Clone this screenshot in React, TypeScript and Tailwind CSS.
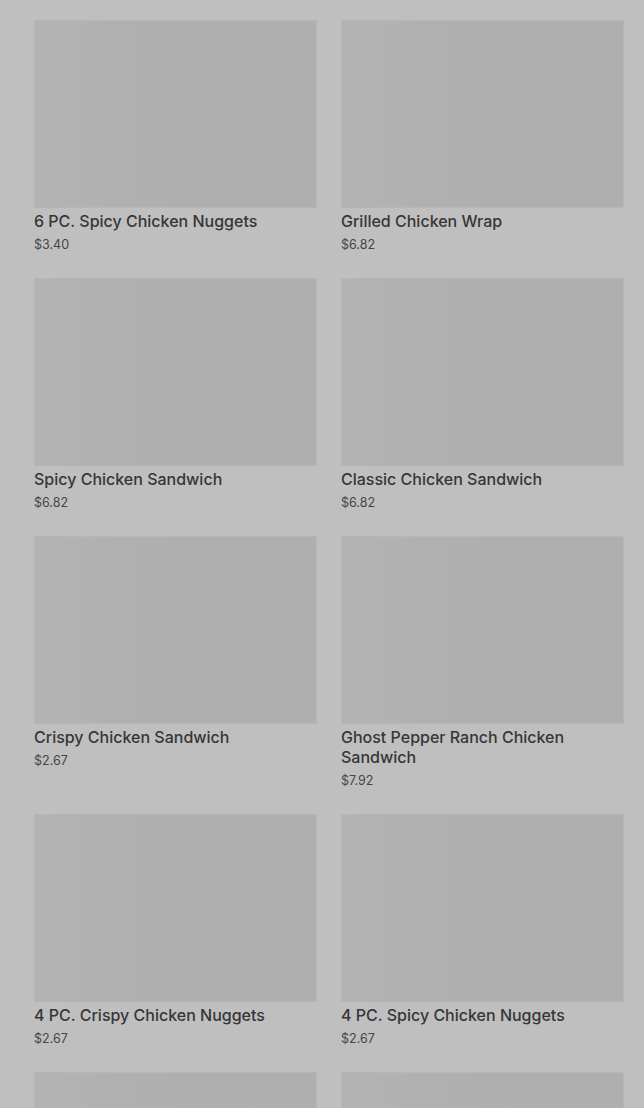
import React from 'react';

const items = [
  { name: '6 PC. Spicy Chicken Nuggets', price: '$3.40' },
  { name: 'Grilled Chicken Wrap', price: '$6.82' },
  { name: 'Spicy Chicken Sandwich', price: '$6.82' },
  { name: 'Classic Chicken Sandwich', price: '$6.82' },
  { name: 'Crispy Chicken Sandwich', price: '$2.67' },
  { name: 'Ghost Pepper Ranch Chicken Sandwich', price: '$7.92' },
  { name: '4 PC. Crispy Chicken Nuggets', price: '$2.67' },
  { name: '4 PC. Spicy Chicken Nuggets', price: '$2.67' },
  { name: '', price: '' },
  { name: '', price: '' },
];

const Card = ({ name, price }: { name: string; price: string }) => (
  <div className="flex flex-col">
    {/* skeleton image */}
    <div className="h-[188px] w-full border border-[#b6b6b6] bg-gradient-to-r from-[#b3b3b3] via-[#afafaf] to-[#afafaf]" />
    {name && (
      <p className="mt-[3px] text-[16px] leading-5 font-medium text-[#363636]">{name}</p>
    )}
    {price && <p className="mt-[4px] text-[12.5px] leading-5 text-[#464646]">{price}</p>}
  </div>
);

export default function App() {
  return (
    <div
      className="h-[1108px] overflow-hidden bg-[#bfbfbf] pt-5 pl-[34px] pr-5"
      style={{ fontFamily: 'Inter, "Noto Sans", sans-serif' }}
    >
      <div className="grid grid-cols-2 gap-x-6 gap-y-[23px]">
        {items.map((it, i) => (
          <Card key={i} name={it.name} price={it.price} />
        ))}
      </div>
    </div>
  );
}
